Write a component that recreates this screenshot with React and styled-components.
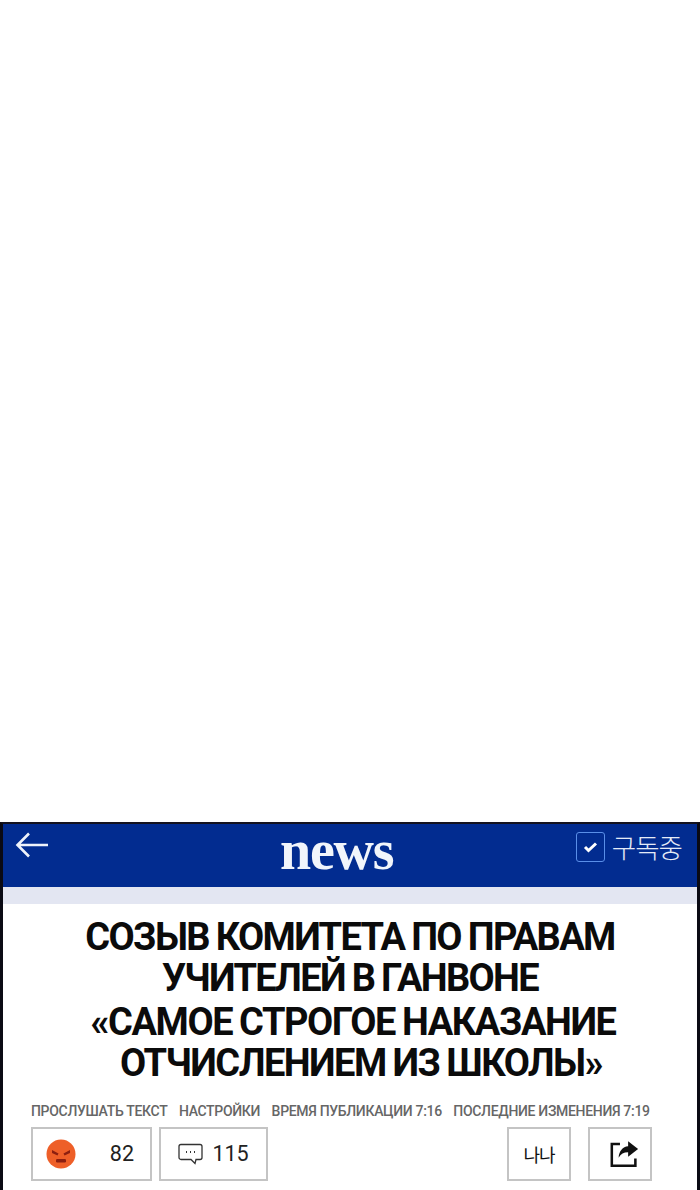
import React from 'react';
import styled, { createGlobalStyle } from 'styled-components';

const GlobalStyle = createGlobalStyle`
  html, body {
    margin: 0;
    padding: 0;
    background: #fff;
  }
  body {
    font-family: Roboto, "Liberation Sans", sans-serif;
  }
`;

const Page = styled.div`
  width: 700px;
  height: 1190px;
  display: flex;
  flex-direction: column;
  justify-content: flex-end;
  overflow: hidden;
  background: #fff;
`;

const Frame = styled.div`
  height: 368px;
  box-sizing: border-box;
  border-top: 2px solid #14131f;
  border-left: 3px solid #0a0a14;
  border-right: 3px solid #0a0a14;
  display: flex;
  flex-direction: column;
`;

const Header = styled.header`
  height: 63px;
  flex: none;
  background: #022c90;
  display: flex;
  justify-content: space-between;
  padding: 4px 15px 0 12px;
  box-sizing: border-box;
  position: relative;
`;

const BackIcon = styled.svg`
  width: 34px;
  height: 28px;
  margin-top: 3px;
`;

const Logo = styled.div`
  position: absolute;
  left: 277px;
  top: 0;
  font-family: "Liberation Serif", serif;
  font-weight: 700;
  font-size: 56px;
  line-height: 52px;
  letter-spacing: -1.2px;
  color: #f1f5fb;
`;

const Subscribed = styled.div`
  display: flex;
  align-items: flex-start;
  gap: 7px;
  margin-top: 4px;
`;

const CheckBox = styled.span`
  width: 29px;
  height: 30px;
  box-sizing: border-box;
  border: 1.5px solid #5a8fe8;
  border-radius: 3px;
  display: flex;
  align-items: center;
  justify-content: center;
`;

const SubscribedLabel = styled.span`
  font-family: "Noto Sans CJK KR", sans-serif;
  font-weight: 300;
  font-size: 26.5px;
  line-height: 29px;
  letter-spacing: -1px;
  color: #e4ebf7;
`;

const Band = styled.div`
  height: 17px;
  flex: none;
  background: #e3e6f2;
`;

const Title = styled.h1`
  margin: 13px 0 0;
  font-family: Roboto, "Liberation Sans", sans-serif;
  font-weight: 700;
  font-size: 38px;
  line-height: 41px;
  word-spacing: -1px;
  color: #0b0b0b;
  text-align: center;
`;

const TitleLine = styled.div`
  padding-left: ${(p) => p.$indent || 0}px;
  margin-top: ${(p) => p.$gap || 0}px;
  letter-spacing: ${(p) => p.$spacing || -1.65}px;
  white-space: nowrap;
`;

const Meta = styled.div`
  margin-top: 18px;
  padding-left: 28px;
  display: flex;
  gap: 11.5px;
  font-size: 14px;
  font-weight: 500;
  line-height: 18px;
  letter-spacing: -0.32px;
  color: #666;
  white-space: nowrap;
`;

const Actions = styled.div`
  margin-top: 7px;
  padding: 0 0 0 28px;
  display: flex;
  gap: 7px;
`;

const ActionButton = styled.div`
  flex: none;
  width: ${(p) => p.$w}px;
  height: 54px;
  box-sizing: border-box;
  border: 2px solid #c4c4c4;
  display: flex;
  align-items: center;
  justify-content: ${(p) => p.$justify || 'center'};
  gap: ${(p) => p.$gap || 0}px;
  padding: ${(p) => p.$pad || '0'};
  margin-left: ${(p) => p.$left || 0}px;
  font-size: 21.5px;
  color: #222;
`;

const Count = styled.span`
  font-weight: 400;
  line-height: 1;
`;

const FontLabel = styled.span`
  font-family: "Noto Sans CJK KR", sans-serif;
  font-weight: 400;
  font-size: 18px;
  letter-spacing: -1px;
  color: #111;
`;

const ShareIcon = styled.svg`
  margin-left: 8px;
`;

const App = () => (
  <Page>
    <GlobalStyle />
    <Frame>
      <Header>
        <BackIcon viewBox="0 0 34 28" fill="none" stroke="#eef2fa" strokeWidth="2.6">
          <path d="M33 14H3M14 2.500 2.500 14 14 25.500" />
        </BackIcon>
        <Logo>news</Logo>
        <Subscribed>
          <CheckBox>
            <svg width="15" height="12" viewBox="0 0 15 12" fill="none" stroke="#fff" strokeWidth="3">
              <path d="M2 6l3.500 3.500L13 2.500" />
            </svg>
          </CheckBox>
          <SubscribedLabel>구독중</SubscribedLabel>
        </Subscribed>
      </Header>
      <Band />
      <Title>
        <TitleLine>СОЗЫВ КОМИТЕТА ПО ПРАВАМ</TitleLine>
        <TitleLine>УЧИТЕЛЕЙ В ГАНВОНЕ</TitleLine>
        <TitleLine $gap={3} $indent={6} $spacing={-1.45}>«САМОЕ СТРОГОЕ НАКАЗАНИЕ</TitleLine>
        <TitleLine $indent={22} $spacing={-1.55}>ОТЧИСЛЕНИЕМ ИЗ ШКОЛЫ»</TitleLine>
      </Title>
      <Meta>
        <span>ПРОСЛУШАТЬ ТЕКСТ</span>
        <span>НАСТРОЙКИ</span>
        <span>ВРЕМЯ ПУБЛИКАЦИИ 7:16</span>
        <span>ПОСЛЕДНИЕ ИЗМЕНЕНИЯ 7:19</span>
      </Meta>
      <Actions>
        <ActionButton $w={121} $justify="space-between" $pad="0 16px 0 13px">
          <svg width="30" height="30" viewBox="0 0 30 30">
            <circle cx="15" cy="15" r="14.500" fill="#ee5f28" />
            <path d="M6 11l6.500 3.500-1 2L6 14zM24 11l-6.500 3.500 1 2L24 14z" fill="#8c1f10" />
            <rect x="10" y="20" width="10" height="3.400" rx="1.200" fill="#8c1f10" />
          </svg>
          <Count>82</Count>
        </ActionButton>
        <ActionButton $w={109} $gap={9}>
          <svg width="25" height="23" viewBox="0 0 25 22" fill="none" stroke="#333" strokeWidth="1.300">
            <path d="M3 1h19a2 2 0 0 1 2 2v11a2 2 0 0 1-2 2h-4l-1 4-4-4H3a2 2 0 0 1-2-2V3a2 2 0 0 1 2-2z" />
            <path d="M8 8.500h1M12 8.500h1M16 8.500h1" strokeWidth="1.800" />
          </svg>
          <Count>115</Count>
        </ActionButton>
        <ActionButton $w={64} $left={232}>
          <FontLabel>나나</FontLabel>
        </ActionButton>
        <ActionButton $w={64} $left={10}>
          <ShareIcon width="29" height="28" viewBox="0 0 32 30" fill="none">
            <path d="M11 4H2v24h26v-8" stroke="#111" strokeWidth="2.800" />
            <path d="M20 1l11 8.500L20 18v-5c-5 0-8 2-10.500 6 .5-7 4.500-12 10.500-12.500z" fill="#111" />
          </ShareIcon>
        </ActionButton>
      </Actions>
    </Frame>
  </Page>
);

export default App;
